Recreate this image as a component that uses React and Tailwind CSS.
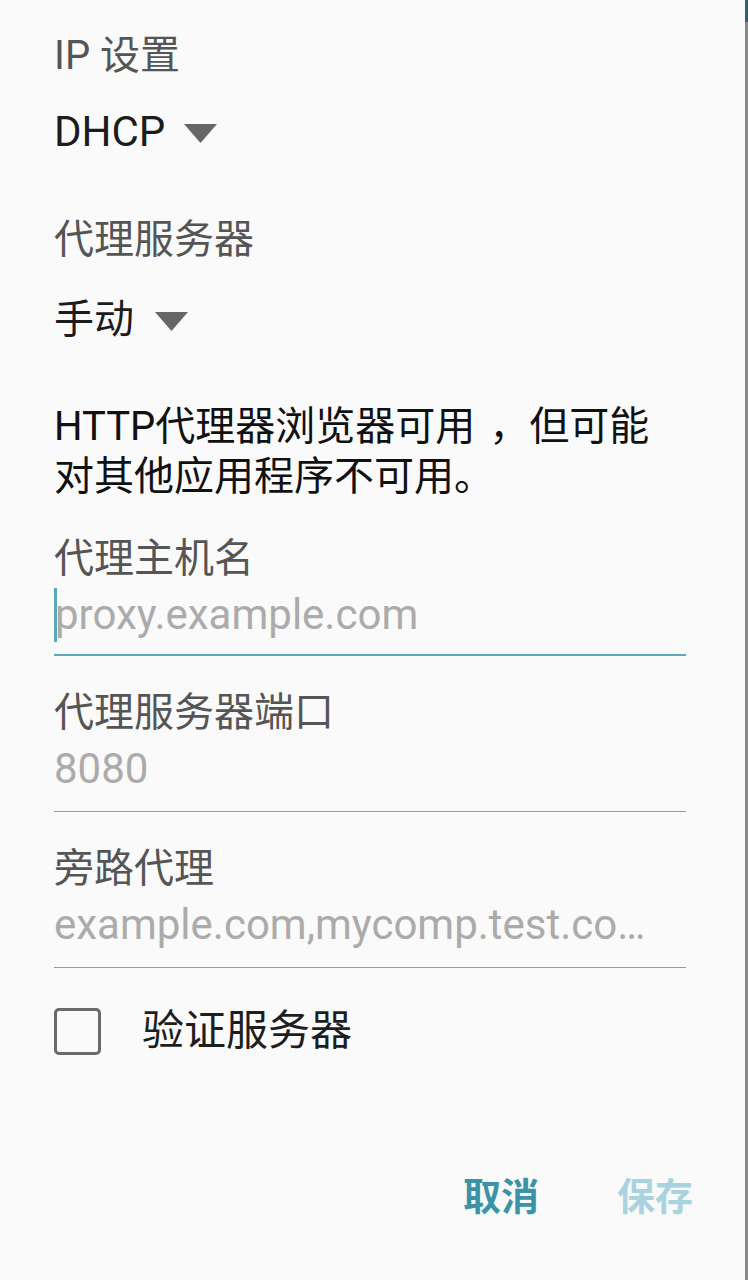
import React from "react";

function Caret() {
  return (
    <svg width="33" height="19" viewBox="0 0 33 19" className="shrink-0">
      <polygon points="0,0 33,0 16.5,19" fill="#666666" />
    </svg>
  );
}

export default function App() {
  return (
    <div className="flex h-[1280px] w-[748px] overflow-hidden bg-[#fafafa] font-[Roboto,'Noto_Sans_CJK_SC',sans-serif]">
      <div className="flex flex-1 flex-col">
        <div className="ml-[54px] flex w-[632px] flex-col">
          <div className="mt-[32px] h-[48px] text-[40px] leading-[48px] text-[#555555]">IP 设置</div>
          <div className="mt-[28px] flex h-[48px] items-center">
            <span className="text-[42px] leading-[48px] text-[#1c1c1c]">DHCP</span>
            <span className="ml-[19px] mt-[2px] flex"><Caret /></span>
          </div>

          <div className="mt-[60px] h-[48px] text-[40px] leading-[48px] text-[#555555]">代理服务器</div>
          <div className="mt-[32px] flex h-[48px] items-center">
            <span className="text-[40px] leading-[48px] text-[#1c1c1c]">手动</span>
            <span className="ml-[21px] mt-[2px] flex"><Caret /></span>
          </div>

          <div className="mt-[58px] whitespace-nowrap text-[40px] leading-[50px] text-[#111111]">
            HTTP代理器浏览器可用
            <span className="pl-[14px]">，</span>
            但可能
            <br />
            对其他应用程序不可用。
          </div>

          <div className="mt-[33px] h-[48px] text-[40px] leading-[48px] text-[#555555]">代理主机名</div>
          <div className="mt-[8px] flex flex-col border-b-2 border-[#5aa8ba] pb-[15px]">
            <div className="flex h-[48px] items-center">
              <span className="mr-[-2px] h-[54px] w-[3px] shrink-0 bg-[#5aa8ba]" />
              <span className="text-[42px] leading-[48px] text-[#ababab]">proxy.example.com</span>
            </div>
          </div>

          <div className="mt-[33px] h-[48px] text-[40px] leading-[48px] text-[#555555]">代理服务器端口</div>
          <div className="mt-[8px] border-b border-[#9a9a9a] pb-[18px] text-[42px] leading-[48px] text-[#ababab]">8080</div>

          <div className="mt-[33px] h-[48px] text-[40px] leading-[48px] text-[#555555]">旁路代理</div>
          <div className="mt-[8px] whitespace-nowrap border-b border-[#9a9a9a] pb-[18px] text-[42px] leading-[48px] text-[#ababab]">
            example.com,mycomp.test.co…
          </div>

          <div className="mt-[39px] flex h-[48px] items-center">
            <span className="h-[47px] w-[47px] shrink-0 rounded-[5px] border-[3px] border-[#6a6a6a]" />
            <span className="ml-[41px] text-[42px] leading-[48px] text-[#1e1e1e]">验证服务器</span>
          </div>
        </div>

        <div className="mt-[118px] flex h-[48px] items-center justify-end gap-[78px] pr-[52px]">
          <span className="text-[38px] font-bold leading-[48px] text-[#3b93a6]">取消</span>
          <span className="text-[38px] font-bold leading-[48px] text-[#a9d3de]">保存</span>
        </div>
      </div>

      <div className="flex w-[3px] flex-col">
        <div className="h-[22px] bg-[#2d6670]" />
        <div className="flex-1 bg-[#8a8a8a]" />
      </div>
    </div>
  );
}
